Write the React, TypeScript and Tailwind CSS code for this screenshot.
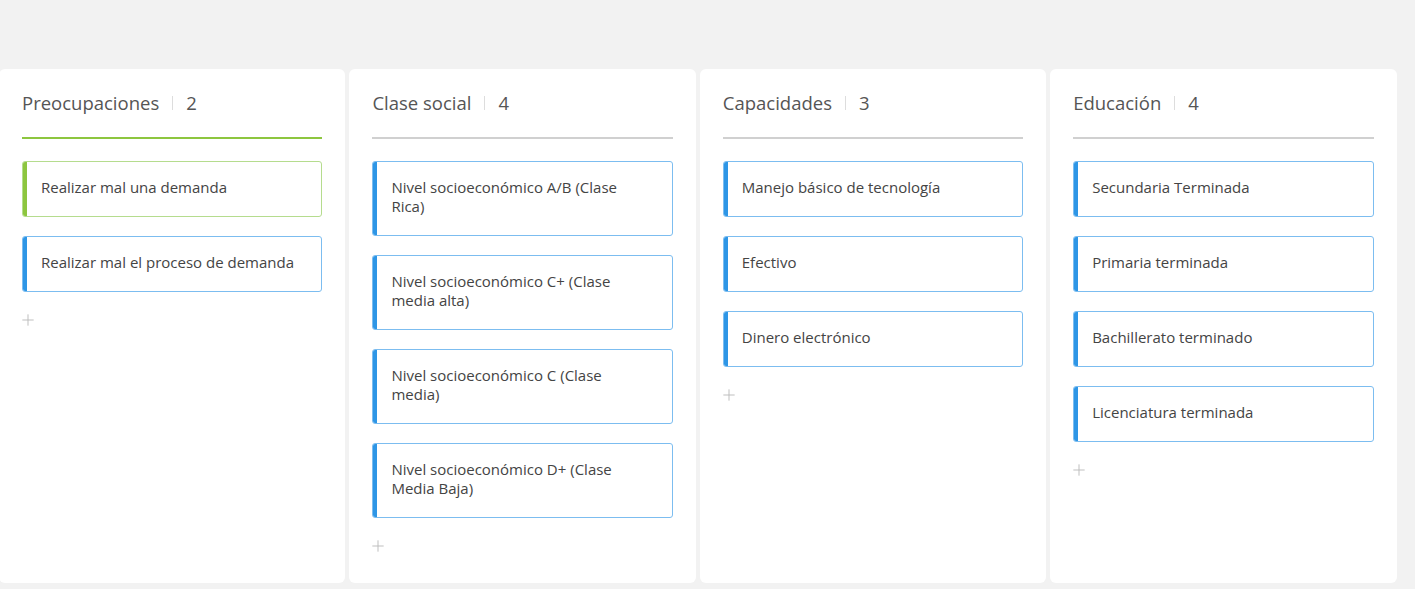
import { Plus } from 'lucide-react';

type Column = {
  title: string;
  accent: 'green' | 'gray';
  cards: { text: string; color: 'green' | 'blue' }[];
};

const columns: Column[] = [
  {
    title: 'Preocupaciones',
    accent: 'green',
    cards: [
      { text: 'Realizar mal una demanda', color: 'green' },
      { text: 'Realizar mal el proceso de demanda', color: 'blue' },
    ],
  },
  {
    title: 'Clase social',
    accent: 'gray',
    cards: [
      { text: 'Nivel socioeconómico A/B (Clase Rica)', color: 'blue' },
      { text: 'Nivel socioeconómico C+ (Clase media alta)', color: 'blue' },
      { text: 'Nivel socioeconómico C (Clase media)', color: 'blue' },
      { text: 'Nivel socioeconómico D+ (Clase Media Baja)', color: 'blue' },
    ],
  },
  {
    title: 'Capacidades',
    accent: 'gray',
    cards: [
      { text: 'Manejo básico de tecnología', color: 'blue' },
      { text: 'Efectivo', color: 'blue' },
      { text: 'Dinero electrónico', color: 'blue' },
    ],
  },
  {
    title: 'Educación',
    accent: 'gray',
    cards: [
      { text: 'Secundaria Terminada', color: 'blue' },
      { text: 'Primaria terminada', color: 'blue' },
      { text: 'Bachillerato terminado', color: 'blue' },
      { text: 'Licenciatura terminada', color: 'blue' },
    ],
  },
];

function Card({ text, color }: { text: string; color: 'green' | 'blue' }) {
  const isGreen = color === 'green';
  return (
    <div
      className={`flex rounded-[3px] border overflow-hidden bg-white ${
        isGreen ? 'border-[#b5dc8e]' : 'border-[#7cbdf0]'
      }`}
    >
      <div className={`w-[4px] shrink-0 ${isGreen ? 'bg-[#8dc63f]' : 'bg-[#2e96e6]'}`} />
      <div className="pl-[14px] pr-[22px] pt-[16px] pb-[19px] text-[15px] leading-[19px] text-[#444]">
        {text}
      </div>
    </div>
  );
}

export default function App() {
  return (
    <div
      className="w-[1415px] h-[589px] bg-[#f2f2f2] overflow-hidden"
      style={{ fontFamily: '"Open Sans", "Liberation Sans", sans-serif' }}
    >
      <div className="flex gap-[4px] pt-[69px] ml-[-1px] h-[583px]">
        {columns.map((col) => (
          <div key={col.title} className="w-[346.4px] shrink-0 bg-white rounded-[6px] px-[23px] pt-[22px]">
            <div className="flex items-center text-[18.5px] leading-[24px] text-[#555] pb-[22px]">
              <span>{col.title}</span>
              <span className="mx-[13px] w-px h-[14px] bg-[#ddd]" />
              <span>{col.cards.length}</span>
            </div>
            <div className={`h-[2px] ${col.accent === 'green' ? 'bg-[#8dc63f]' : 'bg-[#d0d0d0]'}`} />
            <div className="flex flex-col gap-[19px] pt-[22px]">
              {col.cards.map((c) => (
                <Card key={c.text} text={c.text} color={c.color} />
              ))}
            </div>
            <div className="pt-[19px] ml-[-3px] text-[#bdbdbd]">
              <Plus size={18} strokeWidth={1.3} />
            </div>
          </div>
        ))}
      </div>
    </div>
  );
}
